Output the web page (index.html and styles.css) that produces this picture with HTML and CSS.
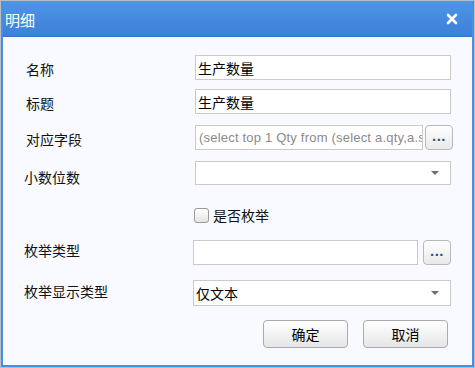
FILE: index.html
```html
<html>
  <head>
    <title>明细</title>
    <link rel="stylesheet" href="styles.css">
  </head>
  <body>
    <div class="window">
      <div class="titlebar">
        <span class="title">明细</span>
        <svg class="close" width="12" height="12" viewBox="0 0 12 12">
          <path d="M2 2 L10 10 M10 2 L2 10" stroke="#fff" stroke-width="2.6" stroke-linecap="round" />
        </svg>
      </div>
      <div class="content">
        <div class="row r1">
          <span class="lbl">名称</span>
          <div class="input">生产数量</div>
        </div>
        <div class="row r2">
          <span class="lbl">标题</span>
          <div class="input">生产数量</div>
        </div>
        <div class="row r3">
          <span class="lbl">对应字段</span>
          <div class="field">
            <div class="input ro"><span class="clip">(select top 1 Qty from (select a.qty,a.s</span></div>
            <div class="dots">...</div>
          </div>
        </div>
        <div class="row r4">
          <span class="lbl low">小数位数</span>
          <div class="input select"><span></span><i class="arrow"></i></div>
        </div>
        <div class="row r5">
          <span class="lbl"></span>
          <label class="check"><span class="box"></span>是否枚举</label>
        </div>
        <div class="row r6">
          <span class="lbl high">枚举类型</span>
          <div class="field">
            <div class="input"></div>
            <div class="dots">...</div>
          </div>
        </div>
        <div class="row r7">
          <span class="lbl up">枚举显示类型</span>
          <div class="input select wide"><span>仅文本</span><i class="arrow"></i></div>
        </div>
        <div class="buttons">
          <div class="btn">确定</div>
          <div class="btn">取消</div>
        </div>
      </div>
    </div>
  </body>
</html>
```

FILE: styles.css
```css
body {
  margin: 0;
  background: #fff;
  font-family: "Noto Sans CJK SC", "Liberation Sans", sans-serif;
}

.window {
  box-sizing: border-box;
  width: 475px;
  height: 368px;
  border: 1px solid #b4bfcc;
  background: #4a8ee0;
  padding: 0 2px 2px 2px;
  display: flex;
  flex-direction: column;
}

.titlebar {
  height: 35px;
  border-bottom: 1px solid #3471c9;
  background: linear-gradient(#4f95e6, #3c80d8);
  display: flex;
  align-items: center;
  padding: 0 14px 0 2px;
  color: #fff;
}

.title {
  font-size: 15px;
  line-height: 1;
  padding-top: 2px;
}

.close {
  margin-left: auto;
}

.content {
  flex: 1;
  background: #f8faff;
  padding: 18px 21px 0 21px;
}

.row {
  display: flex;
  align-items: center;
}

.r1 { height: 25px; margin-bottom: 9px; }
.r2 { height: 25px; margin-bottom: 11px; }
.r3 { height: 25px; margin-bottom: 11px; }
.r4 { height: 24px; margin-bottom: 22px; }
.r5 { height: 16px; margin-bottom: 17px; }
.r6 { height: 25px; margin-bottom: 15px; }
.r7 { height: 26px; margin-bottom: 14px; }

.lbl {
  width: 171px;
  flex: none;
  font-size: 14px;
  line-height: 1;
  color: #111;
  padding-left: 2px;
  padding-top: 3px;
  box-sizing: border-box;
}

.lbl.low {
  padding-left: 0;
  padding-top: 8px;
}

.lbl.high {
  padding-left: 0;
  padding-top: 0;
  padding-bottom: 6px;
}

.lbl.up {
  padding-left: 0;
  padding-top: 0;
  padding-bottom: 5px;
}

.input {
  box-sizing: border-box;
  width: 256px;
  height: 100%;
  border: 1px solid #cacaca;
  background: #fff;
  font-size: 14px;
  line-height: 1;
  color: #000;
  display: flex;
  align-items: center;
  padding: 0 2px;
  white-space: nowrap;
  overflow: hidden;
}

.field {
  display: flex;
  align-items: center;
  gap: 2px;
  height: 100%;
}

.field .input {
  width: 228px;
}

.r6 .field .input {
  width: 225px;
  margin-left: -2px;
  margin-right: 3px;
}

.input.ro {
  font-family: "Liberation Sans", sans-serif;
  font-size: 13px;
  color: #8a8a8a;
  padding-left: 3px;
}

.clip {
  letter-spacing: 0.2px;
}

.dots {
  box-sizing: border-box;
  width: 28px;
  height: 25px;
  border: 1px solid #b9b9b9;
  border-radius: 4px;
  background: linear-gradient(#ffffff, #e9e9e9);
  font-family: "Liberation Sans", sans-serif;
  font-size: 15px;
  font-weight: bold;
  color: #37507e;
  text-align: center;
  line-height: 20px;
  letter-spacing: 0.5px;
}

.select {
  padding-right: 11px;
}

.select.wide {
  width: 260px;
  margin-left: -2px;
}

.arrow {
  margin-left: auto;
  width: 0;
  height: 0;
  border-left: 4px solid transparent;
  border-right: 4px solid transparent;
  border-top: 4px solid #6e6e6e;
}

.check {
  display: flex;
  align-items: center;
  gap: 4px;
  font-size: 14px;
  line-height: 1;
  color: #111;
  margin-left: -1px;
}

.box {
  box-sizing: border-box;
  width: 15px;
  height: 15px;
  border: 1px solid #9a9a9a;
  border-radius: 3px;
  background: linear-gradient(#ffffff, #e4e4e4);
}

.buttons {
  display: flex;
  justify-content: flex-end;
  gap: 15px;
  padding-right: 3px;
}

.btn {
  box-sizing: border-box;
  width: 85px;
  height: 28px;
  border: 1px solid #ababab;
  border-radius: 4px;
  background: linear-gradient(#ffffff, #e6e6e6);
  font-size: 14px;
  line-height: 26px;
  text-align: center;
  color: #000;
}
```
